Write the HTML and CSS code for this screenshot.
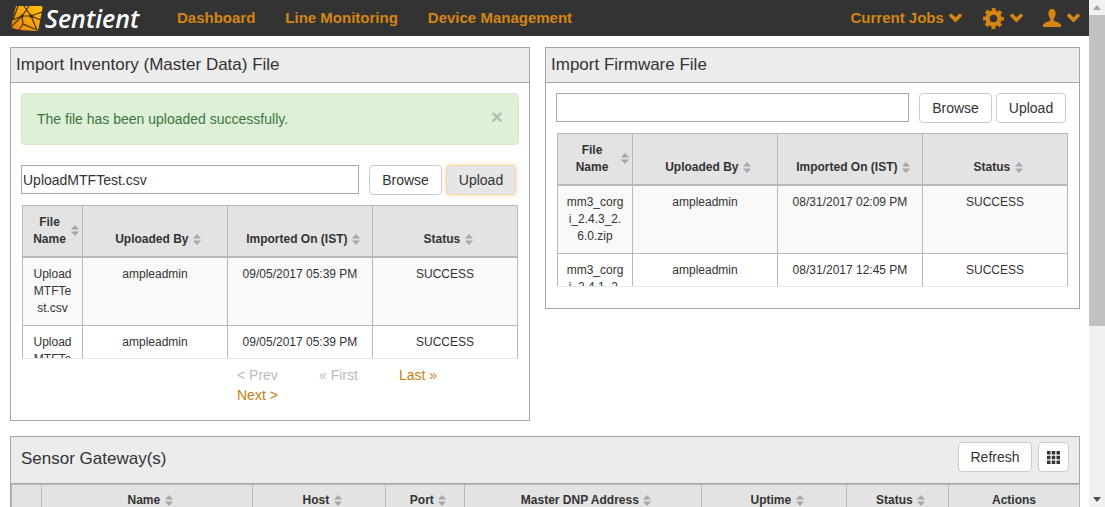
FILE: index.html
```html
<!DOCTYPE html>
<html lang="en">
<head>
  <meta charset="UTF-8">
  <title>Sentient</title>
  <link rel="stylesheet" href="styles.css">
</head>
<body>
  <svg class="defs" width="0" height="0">
    <symbol id="sort" viewBox="0 0 8 11">
      <path d="M4 0 8 4.5H0Z" fill="#a6a6a6"/>
      <path d="M0 6.500H8L4 11Z" fill="#a6a6a6"/>
    </symbol>
    <symbol id="chev" viewBox="0 0 15 10">
      <path d="M2 1.500 7.500 7 13 1.500" fill="none" stroke="#d58512" stroke-width="3.600"/>
    </symbol>
  </svg>

  <div class="page">
    <div class="main">
      <nav class="navbar">
        <div class="brand">
          <svg class="logo" width="34" height="30" viewBox="0 0 34 30">
            <defs>
              <linearGradient id="lg" x1="0" y1="1" x2="1" y2="0">
                <stop offset="0" stop-color="#e8820f"/>
                <stop offset="1" stop-color="#ffc20e"/>
              </linearGradient>
            </defs>
            <path d="M6 3H31Q33 3 32.500 5L28.500 26Q28 28 26 28L10 27Q4 26 1 24Z" fill="url(#lg)"/>
            <path d="M8 3 3 17M19 3 12 13 1 24M32 9 21 13 12 13 3 17M31 17 21 13 14 3M27 27 21 13M27 27 13 21 12 13M13 21 9 27" fill="none" stroke="#4a3410" stroke-width="1.200"/>
            <circle cx="21" cy="13" r="1.800" fill="#3a2a10"/>
            <circle cx="12" cy="13" r="1.500" fill="#3a2a10"/>
          </svg>
          <span class="brand-name">Sentient</span>
        </div>
        <a class="nav-link">Dashboard</a>
        <a class="nav-link">Line Monitoring</a>
        <a class="nav-link">Device Management</a>
        <div class="nav-right">
          <a class="nav-link">Current Jobs <svg class="chev" width="15" height="10"><use href="#chev"/></svg></a>
          <a class="nav-icon">
            <svg width="21" height="21" viewBox="-10.500 -10.500 21 21" fill="none" stroke="#d58512">
              <circle r="6" stroke-width="4.400"/>
              <circle r="8.800" stroke-width="3.200" stroke-dasharray="3.700 3.210" stroke-dashoffset="1.850"/>
            </svg>
            <svg class="chev" width="15" height="10"><use href="#chev"/></svg>
          </a>
          <a class="nav-icon">
            <svg width="18" height="18" viewBox="0 0 18 18">
              <path fill="#d58512" d="M9 0c2.300 0 3.600 1.700 3.600 4.200 0 2.300-.8 4.200-1.800 5.200v2.400c2.600.8 6.200 2 7.200 4V18H0v-2.200c1-2 4.600-3.200 7.200-4V9.400c-1-1-1.800-2.900-1.800-5.200C5.400 1.700 6.700 0 9 0Z"/>
            </svg>
            <svg class="chev" width="15" height="10"><use href="#chev"/></svg>
          </a>
        </div>
      </nav>

      <div class="content">
        <div class="upload-row">
          <section class="panel panel-inventory">
            <div class="panel-heading">Import Inventory (Master Data) File</div>
            <div class="panel-body">
              <div class="alert">
                <span>The file has been uploaded successfully.</span>
                <span class="alert-close">×</span>
              </div>
              <div class="file-row">
                <input class="file-input" type="text" value="UploadMTFTest.csv">
                <button class="btn browse">Browse</button>
                <button class="btn upload focused">Upload</button>
              </div>
              <div class="table-clip">
                <table class="grid">
                  <colgroup><col class="c-file-a"><col class="c-wide"><col class="c-wide"><col class="c-wide"></colgroup>
                  <thead>
                    <tr>
                      <th><span class="th-stack"><span class="th-lines">File<br>Name</span><svg class="sort" width="8" height="11"><use href="#sort"/></svg></span></th>
                      <th>Uploaded By <svg class="sort" width="8" height="11"><use href="#sort"/></svg></th>
                      <th>Imported On (IST) <svg class="sort" width="8" height="11"><use href="#sort"/></svg></th>
                      <th>Status <svg class="sort" width="8" height="11"><use href="#sort"/></svg></th>
                    </tr>
                  </thead>
                  <tbody>
                    <tr class="odd"><td>Upload<br>MTFTe<br>st.csv</td><td>ampleadmin</td><td>09/05/2017 05:39 PM</td><td>SUCCESS</td></tr>
                    <tr><td>Upload<br>MTFTe<br>st.csv</td><td>ampleadmin</td><td>09/05/2017 05:39 PM</td><td>SUCCESS</td></tr>
                  </tbody>
                </table>
              </div>
              <div class="pager">
                <a class="page-link off">&lt; Prev</a>
                <a class="page-link off">« First</a>
                <a class="page-link">Last »</a>
                <a class="page-link">Next &gt;</a>
              </div>
            </div>
          </section>

          <section class="panel panel-firmware">
            <div class="panel-heading">Import Firmware File</div>
            <div class="panel-body">
              <div class="file-row">
                <input class="file-input" type="text">
                <button class="btn browse">Browse</button>
                <button class="btn upload">Upload</button>
              </div>
              <div class="table-clip">
                <table class="grid">
                  <colgroup><col class="c-file-b"><col class="c-wide"><col class="c-wide"><col class="c-wide"></colgroup>
                  <thead>
                    <tr>
                      <th><span class="th-stack"><span class="th-lines">File<br>Name</span><svg class="sort" width="8" height="11"><use href="#sort"/></svg></span></th>
                      <th>Uploaded By <svg class="sort" width="8" height="11"><use href="#sort"/></svg></th>
                      <th>Imported On (IST) <svg class="sort" width="8" height="11"><use href="#sort"/></svg></th>
                      <th>Status <svg class="sort" width="8" height="11"><use href="#sort"/></svg></th>
                    </tr>
                  </thead>
                  <tbody>
                    <tr class="odd"><td>mm3_corg<br>i_2.4.3_2.<br>6.0.zip</td><td>ampleadmin</td><td>08/31/2017 02:09 PM</td><td>SUCCESS</td></tr>
                    <tr><td>mm3_corg<br>i_2.4.1_2.<br>6.0.zip</td><td>ampleadmin</td><td>08/31/2017 12:45 PM</td><td>SUCCESS</td></tr>
                  </tbody>
                </table>
              </div>
            </div>
          </section>
        </div>

        <section class="panel panel-gateway">
          <div class="panel-heading gateway-heading">
            <span>Sensor Gateway(s)</span>
            <div class="gateway-tools">
              <button class="btn refresh">Refresh</button>
              <button class="btn columns" aria-label="Columns">
                <svg width="13" height="13" viewBox="0 0 13 13" fill="#333">
                  <rect width="3.500" height="3.500"/><rect x="4.750" width="3.500" height="3.500"/><rect x="9.500" width="3.500" height="3.500"/>
                  <rect y="4.750" width="3.500" height="3.500"/><rect x="4.750" y="4.750" width="3.500" height="3.500"/><rect x="9.500" y="4.750" width="3.500" height="3.500"/>
                  <rect y="9.500" width="3.500" height="3.500"/><rect x="4.750" y="9.500" width="3.500" height="3.500"/><rect x="9.500" y="9.500" width="3.500" height="3.500"/>
                </svg>
              </button>
            </div>
          </div>
          <table class="grid gateway-grid">
            <colgroup>
              <col class="g-check"><col class="g-name"><col class="g-host"><col class="g-port">
              <col class="g-dnp"><col class="g-uptime"><col class="g-status"><col class="g-actions">
            </colgroup>
            <thead>
              <tr>
                <th></th>
                <th>Name <svg class="sort" width="8" height="11"><use href="#sort"/></svg></th>
                <th>Host <svg class="sort" width="8" height="11"><use href="#sort"/></svg></th>
                <th>Port <svg class="sort" width="8" height="11"><use href="#sort"/></svg></th>
                <th>Master DNP Address <svg class="sort" width="8" height="11"><use href="#sort"/></svg></th>
                <th>Uptime <svg class="sort" width="8" height="11"><use href="#sort"/></svg></th>
                <th>Status <svg class="sort" width="8" height="11"><use href="#sort"/></svg></th>
                <th class="plain">Actions</th>
              </tr>
            </thead>
          </table>
        </section>
      </div>
    </div>

    <div class="scrollbar">
      <span class="arrow-up"></span>
      <div class="thumb-track"><div class="thumb"></div></div>
      <span class="arrow-down"></span>
    </div>
  </div>
</body>
</html>
```

FILE: styles.css
```css
/* General */
* {
  box-sizing: border-box;
}

html, body {
  margin: 0;
  height: 507px;
  overflow: hidden;
}

body {
  font-family: "Liberation Sans", Arial, sans-serif;
  font-size: 14px;
  color: #333;
  background: #fff;
}

.defs {
  position: absolute;
}

.page {
  display: flex;
  height: 507px;
}

.main {
  width: 1089px;
  overflow: hidden;
}

/* Navbar */
.navbar {
  display: flex;
  align-items: center;
  height: 36px;
  background: #333;
  padding-left: 10px;
}

.brand {
  display: flex;
  align-items: center;
  width: 167px;
}

.logo {
  flex: none;
}

.brand-name {
  margin-left: 1px;
  font-family: "Open Sans", sans-serif;
  font-style: italic;
  font-weight: 600;
  font-size: 25px;
  color: #fff;
}

.nav-link {
  padding-bottom: 2px;
  font-size: 15px;
  font-weight: bold;
  color: #d58512;
  margin-right: 30px;
  white-space: nowrap;
}

.nav-right {
  display: flex;
  align-items: center;
  margin-left: auto;
}

.nav-right .nav-link {
  margin-right: 20px;
}

.nav-icon {
  display: flex;
  align-items: center;
  margin-right: 19px;
}

.nav-icon:last-child {
  margin-right: 8px;
}

.nav-icon .chev {
  margin-left: 5px;
}

/* Panels */
.content {
  padding: 11px 9px 0 10px;
}

.upload-row {
  display: flex;
  align-items: flex-start;
  gap: 15px;
}

.panel {
  border: 1px solid #a6a6a6;
  background: #fff;
}

.panel-inventory {
  width: 520px;
  height: 374px;
}

.panel-firmware {
  width: 535px;
  height: 262px;
}

.panel-gateway {
  width: 1070px;
  margin-top: 15px;
}

.panel-heading {
  height: 35px;
  padding-top: 6px;
  padding-left: 5px;
  font-size: 17px;
  line-height: 22px;
  background: #ececec;
  border-bottom: 1px solid #a6a6a6;
}

.panel-body {
  padding: 10px 10px 0;
}

.alert {
  display: flex;
  justify-content: space-between;
  align-items: center;
  height: 52px;
  margin-bottom: 20px;
  padding: 0 15px;
  background: #dff0d8;
  border: 1px solid #d6e9c6;
  border-radius: 4px;
  color: #3c763d;
}

.alert-close {
  margin-top: -4px;
  font-size: 21px;
  font-weight: bold;
  color: #000;
  opacity: .2;
}

/* File row */
.file-row {
  display: flex;
  align-items: flex-start;
}

.file-input {
  height: 29px;
  flex: 1;
  min-width: 0;
  padding: 0 1px;
  border: 1px solid #a9a9a9;
  font-family: inherit;
  font-size: 14px;
  color: #333;
  outline: none;
}

.btn {
  height: 30px;
  background: #fff;
  border: 1px solid #ccc;
  border-radius: 4px;
  font-family: inherit;
  font-size: 14px;
  color: #333;
  padding: 0;
}

.browse {
  width: 73px;
  margin-left: 10px;
}

.upload {
  width: 70px;
  margin-left: 4px;
  margin-right: 3px;
}

.focused {
  background: #e6e6e6;
  border-color: #f5d9ac;
  box-shadow: 0 0 4px rgba(240, 173, 78, .6);
}

/* Tables */
.table-clip {
  height: 154px;
  margin: 10px 1px 0;
  overflow: hidden;
  border-bottom: 1px solid #e8e8e8;
}

.grid {
  width: 100%;
  table-layout: fixed;
  border-collapse: collapse;
  font-size: 12px;
}

.grid th {
  height: 51px;
  padding: 0 1px 8px 7px;
  vertical-align: bottom;
  text-align: center;
  line-height: 17px;
  font-weight: bold;
  background: #e3e3e3;
  border: 1px solid #b9b9b9;
  border-bottom-width: 2px;
}

.grid td {
  height: 69px;
  padding: 8px 7px;
  vertical-align: top;
  text-align: center;
  line-height: 17px;
  border: 1px solid #b9b9b9;
}

.odd td {
  background: #f9f9f9;
}

.sort {
  vertical-align: -2px;
  margin-left: 1px;
}

.th-stack {
  display: inline-flex;
  align-items: center;
  margin-left: -3px;
}

.th-lines {
  width: 41px;
}

.panel-firmware .th-lines {
  width: 56px;
}

.c-file-a { width: 60px; }
.c-file-b { width: 75px; }
.c-wide { width: 145px; }

/* Pager */
.pager {
  display: flex;
  flex-wrap: wrap;
  width: 243px;
  margin: 6px 0 0 216px;
}

.page-link {
  width: 81px;
  line-height: 20px;
  color: #c77f0e;
}

.page-link:first-child {
  width: 82px;
}

.page-link:nth-child(2) {
  width: 80px;
}

.page-link.off {
  color: #bbb;
}

/* Sensor gateway */
.gateway-heading {
  display: flex;
  justify-content: space-between;
  align-items: flex-start;
  height: 47px;
  padding: 6px 10px 0 10px;
  line-height: 32px;
}

.gateway-tools {
  display: flex;
  gap: 6px;
  margin-top: -1px;
}

.refresh {
  width: 74px;
}

.columns {
  display: flex;
  align-items: center;
  justify-content: center;
  width: 31px;
}

.gateway-grid th {
  height: 30px;
  padding-bottom: 5px;
  vertical-align: bottom;
}

.gateway-grid .plain {
  padding-left: 3px;
  padding-right: 3px;
}

.g-check { width: 30px; }
.g-name { width: 211px; }
.g-host { width: 133px; }
.g-port { width: 79px; }
.g-dnp { width: 237px; }
.g-uptime { width: 145px; }
.g-status { width: 102px; }
.g-actions { width: 131px; }

/* Scrollbar */
.scrollbar {
  display: flex;
  flex-direction: column;
  align-items: center;
  width: 16px;
  background: #f1f1f1;
}

.arrow-up, .arrow-down {
  flex: none;
  width: 0;
  height: 0;
  margin: 5px 0;
  border-left: 4px solid transparent;
  border-right: 4px solid transparent;
}

.arrow-up {
  border-bottom: 5px solid #a3a3a3;
}

.arrow-down {
  border-top: 5px solid #505050;
}

.thumb-track {
  flex: 1;
  width: 100%;
}

.thumb {
  height: 311px;
  background: #c1c1c1;
}
```
